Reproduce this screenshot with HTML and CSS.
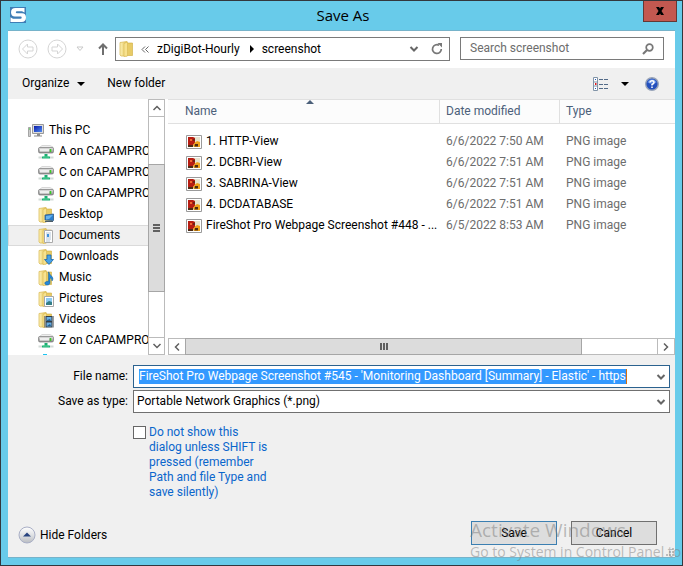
FILE: index.html
```html
<!DOCTYPE html>
<html lang="en">
<head>
<meta charset="utf-8">
<meta name="viewport" content="width=device-width, initial-scale=1">
<title>Save As</title>
<link rel="stylesheet" href="styles.css">
</head>
<body>
<svg class="defs" aria-hidden="true">
  <defs>
    <linearGradient id="gold" x1="0" x2="1" y1="0" y2="0">
      <stop offset="0" stop-color="#fdf2b8"/><stop offset="1" stop-color="#e3c14f"/>
    </linearGradient>
    <linearGradient id="metal" x1="0" x2="0" y1="0" y2="1">
      <stop offset="0" stop-color="#e4e4e4"/><stop offset="1" stop-color="#8b8b8b"/>
    </linearGradient>
    <linearGradient id="screen" x1="0" x2="1" y1="0" y2="1">
      <stop offset="0" stop-color="#0a1aa8"/><stop offset="1" stop-color="#4f8cf0"/>
    </linearGradient>
    <linearGradient id="orb" x1="0" x2="0" y1="0" y2="1">
      <stop offset="0" stop-color="#fff"/><stop offset=".5" stop-color="#dfe1e4"/><stop offset="1" stop-color="#b9bcc1"/>
    </linearGradient>
    <symbol id="folder" viewBox="0 0 16 16">
      <path d="M1 1.500 8 .500V15H2L1 14Z" fill="url(#gold)" stroke="#dcbc5c" stroke-width=".8"/>
      <path d="M8 2h5.500v12.500H7.500Z" fill="#e8cb66" stroke="#cfab3d" stroke-width=".6"/>
      <path d="M5 2.500 8.500 1v14L5 15.500Z" fill="#f7e28f" stroke="#d9b954" stroke-width=".6"/>
    </symbol>
    <symbol id="desktop" viewBox="0 0 16 16">
      <use href="#folder"/>
      <path d="m7 8 8.500-1v6.500L7 13Z" fill="#2a7fd0" stroke="#315b86" stroke-width=".8"/>
      <path d="m8 9 7-1-4 4-3 .5Z" fill="#69b4ed"/><path d="M7 14.500h8" stroke="#4b5c68"/>
    </symbol>
    <symbol id="documents" viewBox="0 0 16 16">
      <use href="#folder"/>
      <path d="M6.500 2.500h8v12h-8z" fill="#fff" stroke="#aaa"/>
      <path d="M8 5h5M8 7h5M8 9h5M8 11h5M8 13h4" stroke="#9eb6ce" stroke-width=".8"/>
      <path d="M9 6h2v3H9z" fill="#3d91dd"/>
    </symbol>
    <symbol id="downloads" viewBox="0 0 16 16">
      <use href="#folder"/>
      <path d="M9 6h4v4.500h2.500L11 15.500 6.500 10.500H9Z" fill="#49a2e5" stroke="#1b67ae" stroke-width=".8"/>
    </symbol>
    <symbol id="music" viewBox="0 0 16 16">
      <use href="#folder"/>
      <path d="M11 2c0 3 4 4 4 7l-1 2c0-3-2-3-2-3v5c0 2-4 3-5 1s2-3 3.500-2.500V2Z" fill="#2586d6" stroke="#176098" stroke-width=".5"/>
    </symbol>
    <symbol id="pictures" viewBox="0 0 16 16">
      <use href="#folder"/>
      <path d="M6.500 5.500h9v10h-9z" fill="#fff" stroke="#a8a8a8"/>
      <path d="M8 7h6v6H8z" fill="#8ccaf2"/><path d="m8 12 3-2 3 1v3H8Z" fill="#347d86"/>
    </symbol>
    <symbol id="videos" viewBox="0 0 16 16">
      <use href="#folder"/>
      <path d="M6.500 4h9v11.500h-9z" fill="#333d45"/><path d="M8.500 5h5v4h-5zM8.500 10.500h5v4h-5z" fill="#69aee4"/>
      <path d="m9 8 3-1 1 2H9Zm0 6 3-2 1 2Z" fill="#245f90"/>
      <path d="M7.500 4.500v11M14.500 4.500v11" stroke="#ddd" stroke-dasharray="1 1"/>
    </symbol>
    <symbol id="drive" viewBox="0 0 16 16">
      <path d="m2 3 2-1.500h8L15 3v1.500H1Z" fill="#eee" stroke="#bbb" stroke-width=".5"/>
      <path d="M.5 4.500Q.5 3.500 2 3.500h12q1.500 0 1.500 1v3q0 1.500-1.500 1.500H2Q.5 9 .5 7.500Z" fill="url(#metal)" stroke="#777" stroke-width=".7"/>
      <path d="M2 5h9v2.500H2z" fill="#eee"/><path d="M12.500 5v3" stroke="#38cf24" stroke-width="1.500"/>
      <path d="M6.500 10h3v2.500H12v2H4v-2h2.500Z" fill="#1cae72"/>
      <path d="M.5 12.500H4v2H.500zM12 12.500h3.500v2H12z" fill="#d4dbd8"/><path d="M5 13h6" stroke="#52d399"/>
    </symbol>
    <symbol id="computer" viewBox="0 0 16 16">
      <path d="M.5 4.500h2v9h-2z" fill="#ccc" stroke="#888" stroke-width=".7"/><path d="M1 6h1" stroke="#3c3"/>
      <path d="M4.500 1.500h11v9h-11z" fill="#ddd" stroke="#999"/><path d="M6 3h8v6H6z" fill="url(#screen)"/>
      <path d="M9 11h3v1.500h2v1H6v-1h3z" fill="#8c8c8c"/>
    </symbol>
    <symbol id="png" viewBox="0 0 16 14">
      <path d="M.5.5h15v13H.5z" fill="#fff" stroke="#9a9a9a"/><path d="M2 2h12v10H2z" fill="#e8e2cd"/>
      <path d="M2 2h5l2 1v5l-2 2H2Z" fill="#b71d12"/><path d="M4 4h2v2H4z" fill="#f06a32"/>
      <path d="M9 7.500 11 6l3 1v5H8l-1-2Z" fill="#efa21b"/><path d="M9 9h3v2.500H8.500zM2 10h5v2H2z" fill="#4e2c15"/>
      <path d="M7 4h2v2H7z" fill="#6e2515"/>
    </symbol>
    <symbol id="chev" viewBox="0 0 10 8"><path d="m1.500 2 3.500 3.500L8.500 2" fill="none" stroke="currentColor" stroke-width="2"/></symbol>
    <symbol id="thin" viewBox="0 0 10 10"><path d="m1.500 3 3.500 3.500L8.500 3" fill="none" stroke="currentColor" stroke-width="1.500"/></symbol>
  </defs>
</svg>
<div class="window">
  <header class="titlebar">
    <svg class="logo" viewBox="0 0 16 16" aria-hidden="true"><path d="M0 0h16v16H0z" fill="#3e7db5"/><path d="M14.500 1v4.500L12 4.200H7Q5.800 4.200 5.800 5.200T7 6.200h5q4 0 4 4.300T11.500 15H.5v-4.800L3 11.700h7.500q1.200 0 1.200-1.200T10.500 9.500H5Q1 9.500 1 5.300T5.500 1Z" fill="#fff"/></svg>
    <h1>Save As</h1>
    <button class="close" type="button" aria-label="Close"><svg viewBox="0 0 10 8"><path d="M1 0h3l1 1.500L6 0h3L6.500 4 9 8H6L5 6.500 4 8H1l2.500-4Z"/></svg></button>
  </header>
  <main>
    <nav class="navbar">
      <button class="plain" type="button" aria-label="Back"><svg width="20" height="20" viewBox="0 0 20 20"><g fill="none" stroke="#d5d5d5"><circle cx="10" cy="10" r="9"/><path d="m4.500 10 5-5v3h5.500v4H9.500v3Z"/></g></svg></button>
      <button class="plain" type="button" aria-label="Forward"><svg width="20" height="20" viewBox="0 0 20 20"><g fill="none" stroke="#d5d5d5"><circle cx="10" cy="10" r="9"/><path d="m15.500 10-5-5v3H5v4h5.500v3Z"/></g></svg></button>
      <button class="plain recent" type="button" aria-label="Recent locations"><svg width="8" height="6" viewBox="0 0 8 6"><path d="M1 1h6L4 4.500Z" fill="none" stroke="#c9c9c9"/></svg></button>
      <button class="plain up" type="button" aria-label="Up"><svg width="10" height="12" viewBox="0 0 10 12"><path d="M5 12V2M1 5.500 5 1.500l4 4" fill="none" stroke="#6f6f6f" stroke-width="2"/></svg></button>
      <div class="address">
        <svg class="i16" aria-hidden="true"><use href="#folder"/></svg>
        <svg class="back2" width="8" height="7" viewBox="0 0 8 7"><path d="M4 .5 1 3.500l3 3M7.500.5l-3 3 3 3" fill="none" stroke="#666"/></svg>
        <a href="#">zDigiBot-Hourly</a>
        <svg width="4" height="8" viewBox="0 0 4 8"><path d="m0 0 4 4-4 4Z"/></svg>
        <a href="#">screenshot</a>
        <button class="plain drop" type="button" aria-label="Previous locations"><svg width="10" height="8"><use href="#chev"/></svg></button>
        <button class="plain" type="button" aria-label="Refresh"><svg width="12" height="12" viewBox="0 0 12 12"><path d="M8 2.200A4.400 4.400 0 1 0 10.300 6" fill="none" stroke="#777" stroke-width="1.700"/><path d="M6.500 0h4.500v4.500Z" fill="#777"/></svg></button>
      </div>
      <div class="search">
        <input type="text" placeholder="Search screenshot" aria-label="Search screenshot">
        <svg width="12" height="12" viewBox="0 0 12 12" aria-hidden="true"><circle cx="7.500" cy="4.500" r="3.300" fill="none" stroke="#777" stroke-width="1.700"/><path d="M5 7 1 11" stroke="#777" stroke-width="2.200"/></svg>
      </div>
    </nav>
    <div class="toolbar">
      <button class="plain" type="button">Organize <svg width="8" height="4" viewBox="0 0 8 4"><path d="M0 0h8L4 4Z"/></svg></button>
      <button class="plain" type="button">New folder</button>
      <button class="plain views" type="button" aria-label="Change view"><svg width="16" height="14" viewBox="0 0 16 14"><path d="M.5.500h4v13h-4zM.5 5h4M.5 9h4" fill="#fff" stroke="#8194a8"/><path d="M2 2h1v1H2zM2 11h1v1H2z" fill="#2458b8"/><path d="M2 6h1.500v2H2z" fill="#e01818"/><path d="M6 2.500h4M11 2.500h4M6 7.500h4M11 7.500h4M6 11.500h4M11 11.500h4" stroke="#536b88"/></svg></button>
      <button class="plain" type="button" aria-label="More views"><svg width="8" height="4" viewBox="0 0 8 4"><path d="M0 0h8L4 4Z"/></svg></button>
      <button class="plain help" type="button" aria-label="Help"><svg width="14" height="14" viewBox="0 0 14 14"><circle cx="7" cy="7" r="6.300" fill="#2450bd" stroke="#9aa5b8" stroke-width="1.400"/><path d="M2.500 5.500a4.800 4.800 0 0 1 9 0Q7 8 2.500 5.500" fill="#638fe4"/><path d="M5 5.500Q5 3.800 7 3.800T9 5.500Q9 6.500 7 7.500v1M7 9.500V11" fill="none" stroke="#fff" stroke-width="1.500"/></svg></button>
    </div>
    <div class="panes">
      <nav class="tree">
        <ul>
          <li class="root"><svg class="i16"><use href="#computer"/></svg>This PC</li>
          <li><svg class="i16"><use href="#drive"/></svg>A on CAPAMPROD</li>
          <li><svg class="i16"><use href="#drive"/></svg>C on CAPAMPROD</li>
          <li><svg class="i16"><use href="#drive"/></svg>D on CAPAMPROD</li>
          <li><svg class="i16"><use href="#desktop"/></svg>Desktop</li>
          <li class="current"><svg class="i16"><use href="#documents"/></svg>Documents</li>
          <li><svg class="i16"><use href="#downloads"/></svg>Downloads</li>
          <li><svg class="i16"><use href="#music"/></svg>Music</li>
          <li><svg class="i16"><use href="#pictures"/></svg>Pictures</li>
          <li><svg class="i16"><use href="#videos"/></svg>Videos</li>
          <li><svg class="i16"><use href="#drive"/></svg>Z on CAPAMPROD</li>
          <li><svg class="i16" viewBox="0 0 16 16"><path d="M1 1h3v3H1zM5 0h4v4H5z" fill="#1cc4f2"/></svg></li>
        </ul>
      </nav>
      <div class="vscroll" aria-hidden="true">
        <span class="end"><svg class="flip" width="10" height="10"><use href="#thin"/></svg></span>
        <span class="space-a"></span><span class="thumb"><i></i></span><span class="space-b"></span>
        <span class="end"><svg width="10" height="10"><use href="#thin"/></svg></span>
      </div>
      <section class="files">
        <table>
          <colgroup><col><col class="c-date"><col class="c-type"></colgroup>
          <thead><tr><th class="sorted">Name<svg width="8" height="4" viewBox="0 0 8 4"><path d="M0 4h8L4 0Z" fill="#4c607a"/></svg></th><th>Date modified</th><th>Type</th></tr></thead>
          <tbody>
            <tr><td><svg class="thumbnail"><use href="#png"/></svg>1. HTTP-View</td><td>6/6/2022 7:50 AM</td><td>PNG image</td></tr>
            <tr><td><svg class="thumbnail"><use href="#png"/></svg>2. DCBRI-View</td><td>6/6/2022 7:51 AM</td><td>PNG image</td></tr>
            <tr><td><svg class="thumbnail"><use href="#png"/></svg>3. SABRINA-View</td><td>6/6/2022 7:51 AM</td><td>PNG image</td></tr>
            <tr><td><svg class="thumbnail"><use href="#png"/></svg>4. DCDATABASE</td><td>6/6/2022 7:51 AM</td><td>PNG image</td></tr>
            <tr><td><svg class="thumbnail"><use href="#png"/></svg>FireShot Pro Webpage Screenshot #448 - ...</td><td>6/5/2022 8:53 AM</td><td>PNG image</td></tr>
          </tbody>
        </table>
        <div class="hscroll" aria-hidden="true">
          <span class="end"><svg class="left" width="10" height="10"><use href="#thin"/></svg></span>
          <span class="thumb"><i></i></span><span class="space"></span>
          <span class="end"><svg class="right" width="10" height="10"><use href="#thin"/></svg></span>
        </div>
      </section>
    </div>
    <form class="fields">
      <label for="name">File name:</label>
      <div class="combo active">
        <input id="name" type="text" value="FireShot Pro Webpage Screenshot #545 - 'Monitoring Dashboard [Summary] - Elastic' - https">
        <button class="plain" type="button" aria-label="Previous names"><svg width="10" height="8"><use href="#chev"/></svg></button>
      </div>
      <label for="type">Save as type:</label>
      <div class="combo">
        <select id="type"><option>Portable Network Graphics (*.png)</option></select>
        <svg class="arrow" width="10" height="8" aria-hidden="true"><use href="#chev"/></svg>
      </div>
      <div class="option">
        <input id="silent" type="checkbox">
        <label for="silent">Do not show this dialog unless SHIFT is pressed (remember Path and file Type and save silently)</label>
      </div>
    </form>
    <footer>
      <button class="plain hide" type="button"><svg width="18" height="18" viewBox="0 0 18 18"><circle cx="9" cy="9" r="8" fill="url(#orb)" stroke="#a9afc6"/><path d="M5 10.500h8L9 6.500Z" fill="#27437f"/></svg>Hide Folders</button>
      <button class="push primary" type="button">Save</button>
      <button class="push" type="button">Cancel</button>
      <svg class="grip" width="8" height="8" viewBox="0 0 8 8" aria-hidden="true"><path d="M6 0h2v2H6zM3 3h2v2H3zM6 3h2v2H6zM0 6h2v2H0zM3 6h2v2H3zM6 6h2v2H6z" fill="#bcbcbc"/></svg>
    </footer>
  </main>
  <div class="watermark"><p class="big">Activate Windows</p><p>Go to System in Control Panel to</p></div>
</div>
</body>
</html>
```
FILE: styles.css
```css
* { box-sizing: border-box; }
body, h1, ul, p { margin: 0; padding: 0; }
body { font: 12px/15px Roboto, "Open Sans", sans-serif; color: #000; }
button, input, select { font: inherit; color: inherit; }
svg { display: block; flex: none; }
.defs { position: absolute; width: 0; height: 0; }
.plain { display: flex; align-items: center; padding: 0; border: 0; background: none; }
.i16 { width: 16px; height: 16px; }

.window { position: relative; display: flex; flex-direction: column; min-height: 100vh; padding: 0 7px 7px; border: 1px solid #33373d; background: #68cbea; overflow: hidden; }
.titlebar { display: grid; grid-template-columns: 34px 1fr 34px; height: 29px; padding-left: 1px; margin-right: -2px; }
.logo { width: 16px; height: 16px; margin: 6px 0 0 1px; }
h1 { font-family: "Open Sans", sans-serif; font-size: 15px; line-height: 29px; font-weight: 400; text-align: center; }
.close { display: grid; place-items: center; height: 21px; padding: 0; border: 1px solid #643835; border-top: 0; background: #c35850; }
.close svg { width: 10px; height: 8px; }
main { flex: 1; display: flex; flex-direction: column; border-top: 1px solid #76b3ca; border-bottom: 1px solid #76b3ca; background: #f0f0f0; }

.navbar { display: flex; align-items: flex-start; height: 37px; padding: 6px 11px 0 10px; background: #fff; }
.navbar > .plain { height: 24px; margin-right: 9px; }
.navbar > .recent { margin: 0 14px 0 0; }
.navbar > .up { margin-right: 7px; }
.address { flex: 324; min-width: 0; display: flex; align-items: center; height: 24px; padding: 0 6px 0 3px; border: 1px solid #7a7a7a; }
.address a { color: #000; text-decoration: none; margin: 0 10px 0 8px; }
.back2 { margin-left: 6px; }
.drop { margin: 0 12px 0 auto; }
.address .drop, .combo svg { color: #666; }
.search { flex: 184; min-width: 0; display: flex; align-items: center; height: 23px; margin-left: 10px; padding: 0 9px; border: 1px solid #7a7a7a; }
.search input { flex: 1; min-width: 0; padding: 0; border: 0; outline: 0; background: none; }
.search input::placeholder { color: #6d6d6d; opacity: 1; }

.toolbar { display: flex; align-items: center; height: 31px; padding: 0 16px 0 14px; }
.toolbar .plain { gap: 8px; margin-right: 22px; }
.toolbar .views { margin: 0 12px 0 auto; }
.toolbar .views + .plain { margin-right: 16px; }
.toolbar .help { margin: 0; }

.panes { display: grid; grid-template-columns: 140px 17px 1fr; height: 256px; background: #fff; }
.tree { overflow: hidden; }
.tree ul { height: 256px; padding-top: 21px; overflow: hidden; list-style: none; }
.tree li { display: flex; align-items: center; gap: 5px; height: 21px; padding-left: 29px; border: 1px solid transparent; border-right: 0; white-space: nowrap; }
.tree .root { padding-left: 19px; }
.tree .current { border-color: #dadada; background: #f0f0f0; }
.vscroll { display: flex; flex-direction: column; border: 1px solid #bbb; }
.end { display: grid; place-items: center; flex: 0 0 16px; color: #606060; }
.flip { transform: rotate(180deg); }
.left { transform: rotate(90deg); }
.right { transform: rotate(-90deg); }
.thumb { display: grid; place-items: center; background: #dcdcdc; border: 1px solid #a6a6a6; }
.vscroll .thumb { flex: 129; margin: 0 -1px; }
.vscroll .space-a { flex: 48; border-top: 1px solid #bbb; }
.vscroll .space-b { flex: 46; border-bottom: 1px solid #bbb; }
.vscroll i { width: 7px; height: 8px; background: repeating-linear-gradient(#606060 0 2px, transparent 2px 3px); }
.files { display: flex; flex-direction: column; min-width: 0; margin-left: 3px; }
table { width: 100%; table-layout: fixed; border-collapse: separate; border-spacing: 0; }
.c-date { width: 120px; }
.c-type { width: 115px; }
th { height: 25px; padding: 0 6px; border: 1px solid #e0e0e0; border-width: 1px 1px 1px 0; background: #fcfcfc; color: #4c607a; font-weight: 400; text-align: left; }
th:last-child { border-right: 0; }
th:first-child { padding-left: 17px; }
.sorted { position: relative; }
.sorted svg { position: absolute; top: 0; left: calc(50% + 2px); }
tbody::before { content: ""; display: block; height: 7px; }
td { height: 21px; padding: 0 6px; color: #6d6d6d; white-space: nowrap; overflow: hidden; }
td:first-child { padding: 0 0 0 18px; color: #000; }
.thumbnail { display: inline-block; width: 16px; height: 14px; margin-right: 4px; vertical-align: middle; }
.hscroll { display: flex; height: 17px; margin-top: auto; border: 1px solid #bbb; }
.hscroll .thumb { flex: 398; margin: -1px 0; }
.hscroll .space { flex: 75; border-right: 1px solid #bbb; }
.hscroll i { width: 8px; height: 7px; background: repeating-linear-gradient(90deg, #606060 0 2px, transparent 2px 3px); }

.fields { display: grid; grid-template-columns: 120px 1fr; gap: 2px 5px; align-items: center; padding: 10px 5px 0 0; }
.fields > label { text-align: right; }
.combo { position: relative; display: flex; align-items: center; min-width: 0; height: 23px; border: 1px solid #707070; background: #fff; }
.active { border-color: #2b628f; }
.combo input { field-sizing: content; min-width: 0; height: 15px; margin-left: 5px; padding: 0; border: 0; border-right: 1px solid #d47010; outline: 0; background: #3399ff; color: #fff; }
.combo .plain { margin: 0 3px 0 auto; }
.combo select { flex: 1; height: 21px; padding: 0 20px 0 3px; border: 0; appearance: none; background: none; }
.arrow { position: absolute; right: 3px; pointer-events: none; }
.option { grid-column: 2; display: flex; align-items: flex-start; gap: 3px; width: 138px; padding-top: 10px; color: #0a66cc; }
.option input { appearance: none; flex: none; width: 13px; height: 13px; margin: 1px 0 0; border: 1px solid #666; background: #fff; }

footer { position: relative; display: flex; align-items: center; gap: 14px; margin-top: auto; padding: 0 18px 12px 10px; }
.hide { gap: 4px; margin: 4px auto 0 0; }
.push { width: 86px; height: 24px; padding: 0; border: 1px solid #707070; background: #dddddd; }
.primary { border-color: #3c7fb1; }
.grip { position: absolute; right: 1px; bottom: 1px; }
.watermark { position: absolute; left: 469px; bottom: 3px; color: rgba(120, 120, 120, .48); font-family: "Open Sans", sans-serif; font-size: 14px; line-height: 20px; white-space: nowrap; pointer-events: none; }
.watermark .big { font-size: 19px; line-height: 24px; }
```
